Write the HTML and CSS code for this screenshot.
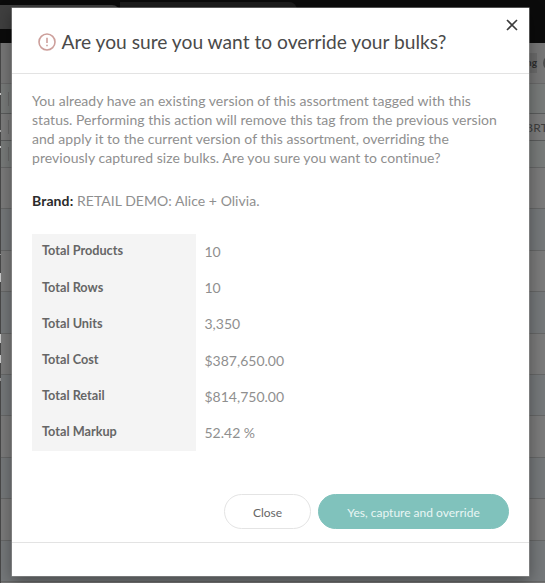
FILE: index.html
```
<!DOCTYPE html>
<html lang="en">
  <head>
    <meta charset="UTF-8" />
    <meta name="viewport" content="width=device-width, initial-scale=1.0" />
    <title>Override bulks</title>
    <link rel="stylesheet" href="styles.css">
  </head>
  <body>
    <!-- page behind the dialog -->
    <div class="page">
      <div class="tabs">
        <div class="tab active"></div>
        <div class="tab"></div>
      </div>
      <div class="toolbar">
        <span class="tag">ng</span>
        <span class="dot"></span>
      </div>
      <ul class="rows">
        <li class="row short"><i class="tick"></i></li>
        <li class="row head"><i class="tick"></i><span class="col">BRT</span></li>
        <li class="row short"><i class="tick"></i></li>
        <li class="row"></li>
        <li class="row cool"></li>
        <li class="row"></li>
        <li class="row cool"></li>
        <li class="row"></li>
        <li class="row cool"></li>
        <li class="row"></li>
        <li class="row cool"></li>
        <li class="row"></li>
        <li class="row cool"></li>
      </ul>
      <div class="sidebar"></div>
    </div>

    <div class="modal">
      <button class="close-icon" aria-label="Close">
        <svg width="12" height="12" viewBox="0 0 12 12"><path d="M1 1L11 11M11 1L1 11" /></svg>
      </button>
      <div class="modal-header">
        <svg class="warn" width="18" height="18" viewBox="0 0 18 18">
          <circle cx="9" cy="9" r="8" />
          <path d="M9 4.8V10M9 11.8V13.2" />
        </svg>
        <h1>Are you sure you want to override your bulks?</h1>
      </div>
      <div class="modal-body">
        <p class="message">
          You already have an existing version of this assortment tagged with this<br />
          status. Performing this action will remove this tag from the previous version<br />
          and apply it to the current version of this assortment, overriding the<br />
          previously captured size bulks. Are you sure you want to continue?
        </p>
        <p class="brand"><b>Brand:</b> RETAIL DEMO: Alice + Olivia.</p>
        <dl class="totals">
          <dt>Total Products</dt>
          <dd>10</dd>
          <dt>Total Rows</dt>
          <dd>10</dd>
          <dt>Total Units</dt>
          <dd>3,350</dd>
          <dt>Total Cost</dt>
          <dd>$387,650.00</dd>
          <dt>Total Retail</dt>
          <dd>$814,750.00</dd>
          <dt>Total Markup</dt>
          <dd>52.42 %</dd>
        </dl>
        <div class="actions">
          <button class="btn">Close</button>
          <button class="btn primary">Yes, capture and override</button>
        </div>
      </div>
      <div class="modal-footer"></div>
    </div>
  </body>
</html>
```
FILE: styles.css
```
* {
  margin: 0;
  padding: 0;
  box-sizing: border-box;
}

ul {
  list-style: none;
}
body {
  width: 545px;
  height: 583px;
  overflow: hidden;
  position: relative;
  font-family: Lato, "Liberation Sans", sans-serif;
  font-variant-ligatures: none;
  color: #8f8f8f;
}
.page {
  height: 583px;
  overflow: hidden;
  background-color: #777;
}
.tabs {
  display: flex;
  height: 43px;
  padding-top: 2px;
  background-color: #0b0b0b;
}
.tabs .tab {
  width: 177px;
  height: 27px;
  border-radius: 0 8px 0 0;
  background-color: #1d1d1d;
}
.tabs .tab.active {
  width: 120px;
  height: 24px;
  margin-top: 3px;
  background-color: #3f3f3f;
}
.toolbar {
  display: flex;
  align-items: center;
  justify-content: flex-end;
  gap: 6px;
  height: 41px;
  color: #2d2d2d;
  font-size: 10px;
  font-weight: 700;
  border-bottom: 1px solid #696969;
}
.toolbar .tag {
  height: 20px;
  padding-left: 40px;
  line-height: 19px;
  background-color: #6b6b6b;
}
.toolbar .dot {
  width: 16px;
  height: 16px;
  margin-right: -14px;
  border-radius: 50%;
  background-color: #4d4d4d;
}
.rows .row {
  display: flex;
  align-items: center;
  justify-content: space-between;
  height: 41.4px;
  padding-left: 8px;
  border-bottom: 1px solid #666767;
  background-color: #7b7b7b;
}
.rows .row.cool {
  background-color: #75787a;
}
.rows .row.short {
  height: 27px;
  background-color: #787b7a;
}
.rows .row.head {
  height: 27px;
  border-color: #5a5c5c;
  background-color: #7c7c7c;
}
.rows .row:first-child {
  height: 30px;
  border-color: #5a5c5c;
}
.rows .tick {
  width: 1px;
  height: 14px;
  background-color: #6a6a6a;
}
.rows .col {
  margin-right: -3px;
  font-size: 12px;
  letter-spacing: 0.2px;
  color: #3e3e3e;
}
.sidebar {
  position: absolute;
  left: 0;
  top: 43px;
  width: 1px;
  height: 540px;
  background: linear-gradient(
    #484848 50px, #ccc 50px 52px, #484848 52px 87px, #aaa 87px 89px,
    #484848 89px 103px, #ccc 103px 105px, #484848 105px 211px,
    #999 211px 212px, #484848 212px 230px, #ccc 230px 239px,
    #484848 239px 291px, #ccc 291px 300px, #484848 300px 312px,
    #ccc 312px 320px, #484848 320px 335px, #999 335px 338px, #484848 338px
  );
}
.modal {
  position: absolute;
  left: 12px;
  top: 8px;
  display: flex;
  flex-direction: column;
  width: 517px;
  height: 568px;
  background-color: #fff;
  box-shadow: 0 0 0 0.5px #999, 0 5px 15px rgba(0, 0, 0, 0.4);
}
.close-icon {
  position: absolute;
  right: 11px;
  top: 11px;
  width: 12px;
  height: 12px;
  border: 0;
  background: none;
}
.close-icon svg {
  display: block;
  fill: none;
  stroke: #3c3c3c;
  stroke-width: 1.6;
}
.modal-header {
  display: flex;
  align-items: center;
  gap: 6px;
  height: 66px;
  padding: 3px 26px 0;
  border-bottom: 1px solid #e3e3e3;
}
.modal-header .warn {
  fill: none;
  stroke: #cd9f9b;
  stroke-width: 1.6;
}
.modal-header h1 {
  margin-left: -0.5px;
  font-size: 19.2px;
  font-weight: 400;
  line-height: 24px;
  white-space: nowrap;
  color: #4a4a4a;
}
.modal-body {
  height: 468px;
  padding: 17px 20px 0;
}
.message,
.brand {
  font-size: 14px;
  line-height: 19px;
  letter-spacing: 0.04px;
  white-space: nowrap;
}
.brand {
  margin-top: 24px;
}
.brand b {
  letter-spacing: 0.1px;
  color: #2b2b2b;
}
.totals {
  display: grid;
  grid-template-columns: 164px 1fr;
  grid-auto-rows: 36.2px;
  margin-top: 23.5px;
}
.totals dt {
  padding: 8.9px 10px 0;
  font-size: 12.7px;
  font-weight: 700;
  line-height: 16px;
  color: #666;
  background-color: #f4f4f4;
}
.totals dd {
  padding: 9.5px 8.5px 0;
  font-size: 14px;
  line-height: 18px;
}
.actions {
  display: flex;
  justify-content: flex-end;
  gap: 7px;
  margin-top: 43.5px;
}
.btn {
  width: 87px;
  height: 35px;
  padding-top: 2px;
  border: 1px solid #e4e4e4;
  border-radius: 18px;
  font-family: inherit;
  font-size: 12px;
  color: #666;
  background-color: #fff;
}
.btn.primary {
  width: 191px;
  border-color: #80c2bc;
  color: #e9f6f4;
  background-color: #80c2bc;
}
.modal-footer {
  flex: 1;
  border-top: 1px solid #e3e3e3;
}
```
